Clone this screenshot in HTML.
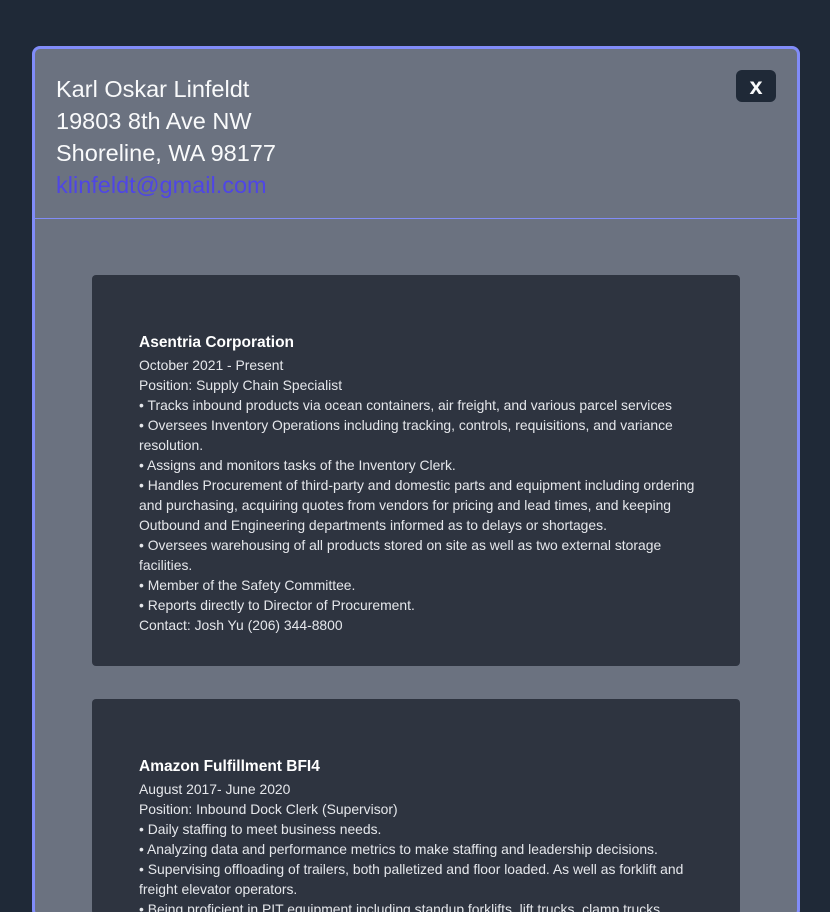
<!DOCTYPE html>
<html style="width:830px;height:912px;overflow:hidden"><head><style>
*{box-sizing:border-box;margin:0;padding:0}
body{width:830px;height:912px;overflow:hidden;background:#1f2937;font-family:"Liberation Sans",sans-serif;position:relative}
.modal{position:absolute;left:32px;top:46px;width:768px;height:872px;background:#6b7280;border:3px solid #818cf8;border-radius:8px;overflow:hidden}
.hdr{height:170px;border-bottom:1px solid #818cf8;padding:24px 21px;position:relative}
.hdr div{font-size:23.5px;line-height:32px;color:#f9fafb;white-space:nowrap}
.hdr .em{color:#4f46e5}
.x{position:absolute;left:701px;top:21px;width:40px;height:32px;background:#1f2937;border-radius:6px;color:#fff;font-size:19px;font-weight:bold;text-align:center;line-height:36px}
.card{position:absolute;left:57px;width:648px;background:#2e3440;border-radius:4px;padding:56px 20px 30px 47px;color:#e5e7eb;font-size:13.9px;line-height:20px;white-space:nowrap;overflow:hidden}
.card b{display:block;color:#fff;font-size:15.5px;line-height:24px}
</style></head><body>
<div class="modal">
<div class="hdr">
<div>Karl Oskar Linfeldt</div>
<div>19803 8th Ave NW</div>
<div>Shoreline, WA 98177</div>
<div class="em">klinfeldt@gmail.com</div>
<div class="x">x</div>
</div>
<div class="card" style="top:226px;height:391px">
<b>Asentria Corporation</b>
October 2021 - Present<br>
Position: Supply Chain Specialist<br>
• Tracks inbound products via ocean containers, air freight, and various parcel services<br>
• Oversees Inventory Operations including tracking, controls, requisitions, and variance<br>
resolution.<br>
• Assigns and monitors tasks of the Inventory Clerk.<br>
• Handles Procurement of third-party and domestic parts and equipment including ordering<br>
and purchasing, acquiring quotes from vendors for pricing and lead times, and keeping<br>
Outbound and Engineering departments informed as to delays or shortages.<br>
• Oversees warehousing of all products stored on site as well as two external storage<br>
facilities.<br>
• Member of the Safety Committee.<br>
• Reports directly to Director of Procurement.<br>
Contact: Josh Yu (206) 344-8800
</div>
<div class="card" style="top:650px;height:216px">
<b>Amazon Fulfillment BFI4</b>
August 2017- June 2020<br>
Position: Inbound Dock Clerk (Supervisor)<br>
• Daily staffing to meet business needs.<br>
• Analyzing data and performance metrics to make staffing and leadership decisions.<br>
• Supervising offloading of trailers, both palletized and floor loaded. As well as forklift and<br>
freight elevator operators.<br>
• Being proficient in PIT equipment including standup forklifts, lift trucks, clamp trucks
</div>
</div>
</body></html>
